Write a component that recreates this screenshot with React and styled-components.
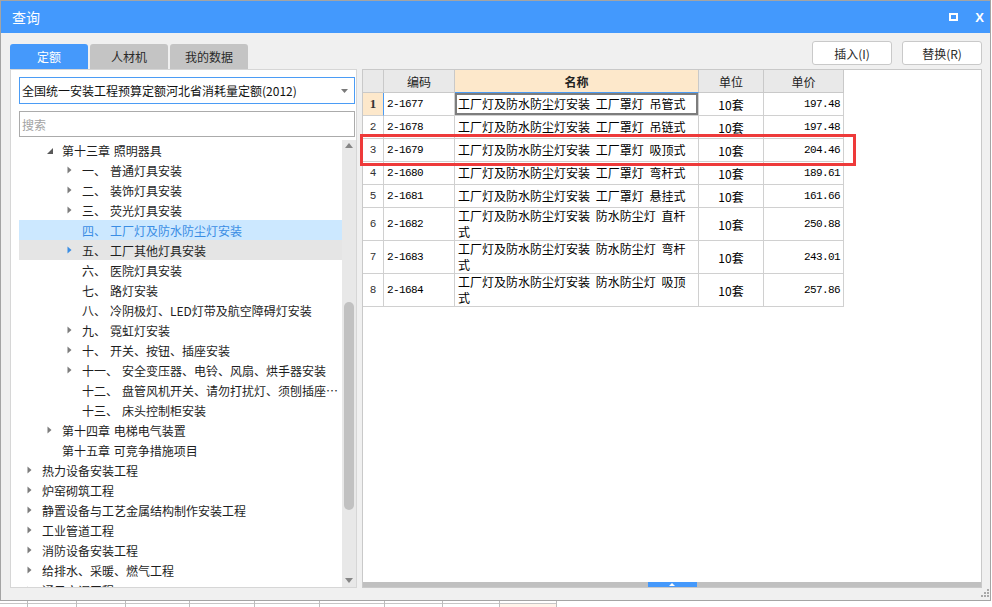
import React from 'react';
import styled, { createGlobalStyle } from 'styled-components';

const UI = '"Noto Sans CJK SC", "Noto Sans", sans-serif';
const MONO = '"Liberation Mono", "DejaVu Sans Mono", monospace';

const GlobalStyle = createGlobalStyle`
  *, *::before, *::after { box-sizing: border-box; }
  html, body { margin: 0; padding: 0; background: #ffffff; }
  body { font-family: ${UI}; font-size: 12px; color: #1e1e1e; }
`;

const Page = styled.div`
  width: 992px;
  height: 607px;
  overflow: hidden;
  display: flex;
  flex-direction: column;
`;

const Window = styled.div`
  width: 991px;
  height: 601px;
  flex: none;
  border: 1px solid #a4a4a4;
  background: #f0f0f0;
  display: flex;
  flex-direction: column;
`;

const TitleBar = styled.div`
  height: 32px;
  flex: none;
  background: #4399fd;
  color: #fff;
  display: flex;
  align-items: center;
  justify-content: space-between;
  padding: 0 6px 0 11px;
`;

const Title = styled.span`
  font-size: 14px;
  line-height: 16px;
`;

const WinControls = styled.div`
  display: flex;
  align-items: center;
  gap: 17px;
`;

const MaxIcon = styled.span`
  width: 9px;
  height: 8px;
  border: 2px solid #fff;
`;

const CloseIcon = styled.span`
  font-family: "Liberation Sans", sans-serif;
  font-weight: 700;
  font-size: 13px;
  line-height: 1;
`;

const Body = styled.div`
  flex: 1;
  position: relative;
  display: flex;
  flex-direction: column;
  padding: 8px 8px 12px 9px;
`;

const TopRow = styled.div`
  height: 28px;
  flex: none;
  display: flex;
  justify-content: space-between;
`;

const Tabs = styled.div`
  display: flex;
  align-self: flex-end;
  gap: 2px;
`;

const Tab = styled.div`
  width: 78px;
  height: 25px;
  border-radius: 3px 3px 0 0;
  display: flex;
  align-items: center;
  justify-content: center;
  font-size: 12px;
  background: ${(p) => (p.$active ? '#4599fb' : '#c4c4c4')};
  color: ${(p) => (p.$active ? '#ffffff' : '#2a2a2a')};
`;

const Actions = styled.div`
  display: flex;
  gap: 10px;
  align-self: flex-start;
`;

const Button = styled.button`
  width: 80px;
  height: 24px;
  border: 1px solid #c9c9c9;
  border-radius: 3px;
  background: #ffffff;
  font-family: ${UI};
  font-size: 12px;
  color: #2a2a2a;
  padding: 0;
`;

const Panels = styled.div`
  height: 519px;
  flex: none;
  display: flex;
  gap: 5px;
`;

const LeftPanel = styled.div`
  width: 347px;
  flex: none;
  border: 1px solid #d6d6d6;
  background: #ffffff;
  display: flex;
  flex-direction: column;
  padding: 7px 0 0 8px;
`;

const Select = styled.div`
  height: 27px;
  flex: none;
  margin-right: 1px;
  border: 1px solid #4b9cf5;
  display: flex;
  align-items: center;
  justify-content: space-between;
  padding: 0 6px 0 2px;
  font-size: 12px;
  color: #111;
`;

const Search = styled.div`
  height: 26px;
  flex: none;
  margin: 7px 1px 0 0;
  border: 1px solid #ababab;
  display: flex;
  align-items: center;
  padding-left: 2px;
  font-size: 12px;
  color: #a3a3a3;
`;

const Tree = styled.div`
  flex: 1;
  margin-top: 3px;
  display: flex;
  overflow: hidden;
  min-height: 0;
`;

const TreeList = styled.div`
  flex: 1;
  min-width: 0;
  overflow: hidden;
`;

const TreeRow = styled.div`
  height: 20px;
  display: flex;
  align-items: center;
  padding-left: ${(p) => 8 + p.$level * 20}px;
  background: ${(p) => (p.$selected ? '#cce8ff' : p.$hover ? '#e5e5e5' : 'transparent')};
  color: ${(p) => (p.$selected ? '#3a8de4' : '#1e1e1e')};
  font-size: 12px;
  white-space: nowrap;
  word-spacing: 1px;
`;

const Toggle = styled.span`
  width: 15px;
  flex: none;
  display: flex;
  align-items: center;
  height: 20px;
`;

const Num = styled.span`
  flex: none;
  margin-right: 4px;
`;

const Label = styled.span`
  overflow: hidden;
  text-overflow: ellipsis;
  min-width: 0;
`;

const VScroll = styled.div`
  width: 14px;
  flex: none;
  background: #e8e8e8;
  display: flex;
  flex-direction: column;
  align-items: center;
  padding: 3px 0 4px;
`;

const ScrollTrack = styled.div`
  flex: 1;
  width: 100%;
  display: flex;
  flex-direction: column;
  align-items: center;
  padding-top: ${(p) => p.$offset}px;
`;

const Thumb = styled.div`
  width: 10px;
  height: ${(p) => p.$size}px;
  border-radius: 5px;
  background: #c1c1c1;
`;

const RightPanel = styled.div`
  flex: 1;
  position: relative;
  border: 1px solid #c9c9c9;
  background: #ffffff;
  display: flex;
  flex-direction: column;
`;

const Table = styled.div`
  display: flex;
  flex-direction: column;
`;

const TableRow = styled.div`
  display: grid;
  grid-template-columns: 21px 71px 244px 65px 80px;
  height: ${(p) => (p.$tall ? 33 : 23)}px;
`;

const Cell = styled.div`
  border-right: 1px solid #d0d0d0;
  border-bottom: 1px solid #d0d0d0;
  display: flex;
  align-items: center;
  padding: 0 3px;
  overflow: hidden;
  min-width: 0;
  justify-content: ${(p) => (p.$align === 'center' ? 'center' : p.$align === 'right' ? 'flex-end' : 'flex-start')};
`;

const HeadCell = styled(Cell)`
  justify-content: center;
  background: ${(p) => (p.$active ? '#fde8cb' : '#e9e9e9')};
  font-weight: ${(p) => (p.$active ? 700 : 400)};
  border-bottom-color: ${(p) => (p.$active ? '#4b9cf5' : '#c9c9c9')};
  border-right-color: #c9c9c9;
  font-size: 12px;
  color: #222;
`;

const RowNum = styled(Cell)`
  justify-content: center;
  padding: 0;
  background: ${(p) => (p.$current ? '#fde8cb' : '#ffffff')};
  border-right-color: ${(p) => (p.$current ? '#4b9cf5' : '#d0d0d0')};
  font-family: ${(p) => (p.$current ? '"Liberation Serif", serif' : MONO)};
  font-weight: ${(p) => (p.$current ? 700 : 400)};
  font-size: ${(p) => (p.$current ? 13 : 11)}px;
  color: #333;
`;

const MonoCell = styled(Cell)`
  font-family: ${MONO};
  font-size: 11px;
  letter-spacing: -0.6px;
  color: #000;
`;

const NameCell = styled(Cell)`
  font-size: 12px;
  line-height: 16px;
  word-spacing: 3px;
  color: #000;
  box-shadow: ${(p) => (p.$focus ? 'inset 0 0 0 2px #7d7d7d' : 'none')};
`;

const UnitCell = styled(Cell)`
  font-size: 12px;
  color: #000;
`;

const Splitter = styled.div`
  height: 5px;
  flex: none;
  margin-top: auto;
  background: #c0c0c0;
  display: flex;
  justify-content: center;
`;

const SplitHandle = styled.div`
  width: 49px;
  background: #4599fb;
  display: flex;
  align-items: center;
  justify-content: center;
`;

const Highlight = styled.div`
  position: absolute;
  left: -3px;
  top: 64px;
  width: 496px;
  height: 32px;
  border: 3px solid #ee3a3a;
  pointer-events: none;
`;

const Grip = styled.svg`
  position: absolute;
  right: 0;
  bottom: 2px;
`;

const BackStrip = styled.div`
  height: 6px;
  flex: none;
  display: flex;
`;

const BackCell = styled.div`
  width: ${(p) => p.$w}px;
  height: 6px;
  flex: none;
  border-right: 1px solid #bdbdbd;
  background: linear-gradient(
    to bottom,
    transparent 2px,
    #c6c6c6 2px,
    #c6c6c6 3px,
    ${(p) => (p.$tint ? '#fff3ea' : 'transparent')} 3px
  );
`;

const Arrow = ({ type, color }) => {
  if (type === 'open') {
    return (
      <svg width="7" height="7" viewBox="0 0 7 7" style={{ marginTop: 3 }}>
        <polygon points="6,0 6,6 0,6" fill="#595959" />
      </svg>
    );
  }
  return (
    <svg width="5" height="8" viewBox="0 0 5 8">
      <polygon points="0.5,0.5 4.5,4 0.5,7.5" fill={color || '#7c7c7c'} />
    </svg>
  );
};

const TREE = [
  { lv: 1, tog: 'open', text: '第十三章 照明器具' },
  { lv: 2, tog: 'closed', num: '一、', text: '普通灯具安装' },
  { lv: 2, tog: 'closed', num: '二、', text: '装饰灯具安装' },
  { lv: 2, tog: 'closed', num: '三、', text: '荧光灯具安装' },
  { lv: 2, num: '四、', text: '工厂灯及防水防尘灯安装', sel: true },
  { lv: 2, tog: 'closed', num: '五、', text: '工厂其他灯具安装', hov: true },
  { lv: 2, num: '六、', text: '医院灯具安装' },
  { lv: 2, num: '七、', text: '路灯安装' },
  { lv: 2, num: '八、', text: '冷阴极灯、LED灯带及航空障碍灯安装' },
  { lv: 2, tog: 'closed', num: '九、', text: '霓虹灯安装' },
  { lv: 2, tog: 'closed', num: '十、', text: '开关、按钮、插座安装' },
  { lv: 2, tog: 'closed', num: '十一、', text: '安全变压器、电铃、风扇、烘手器安装' },
  { lv: 2, num: '十二、', text: '盘管风机开关、请勿打扰灯、须刨插座安装' },
  { lv: 2, num: '十三、', text: '床头控制柜安装' },
  { lv: 1, tog: 'closed', text: '第十四章 电梯电气装置' },
  { lv: 1, text: '第十五章 可竞争措施项目' },
  { lv: 0, tog: 'closed', text: '热力设备安装工程' },
  { lv: 0, tog: 'closed', text: '炉窑砌筑工程' },
  { lv: 0, tog: 'closed', text: '静置设备与工艺金属结构制作安装工程' },
  { lv: 0, tog: 'closed', text: '工业管道工程' },
  { lv: 0, tog: 'closed', text: '消防设备安装工程' },
  { lv: 0, tog: 'closed', text: '给排水、采暖、燃气工程' },
  { lv: 0, tog: 'closed', text: '通风空调工程' },
];

const ROWS = [
  { code: '2-1677', name: '工厂灯及防水防尘灯安装 工厂罩灯 吊管式', price: '197.48' },
  { code: '2-1678', name: '工厂灯及防水防尘灯安装 工厂罩灯 吊链式', price: '197.48' },
  { code: '2-1679', name: '工厂灯及防水防尘灯安装 工厂罩灯 吸顶式', price: '204.46' },
  { code: '2-1680', name: '工厂灯及防水防尘灯安装 工厂罩灯 弯杆式', price: '189.61' },
  { code: '2-1681', name: '工厂灯及防水防尘灯安装 工厂罩灯 悬挂式', price: '161.66' },
  { code: '2-1682', name: '工厂灯及防水防尘灯安装 防水防尘灯 直杆式', price: '250.88', tall: true },
  { code: '2-1683', name: '工厂灯及防水防尘灯安装 防水防尘灯 弯杆式', price: '243.01', tall: true },
  { code: '2-1684', name: '工厂灯及防水防尘灯安装 防水防尘灯 吸顶式', price: '257.86', tall: true },
];

const BACK_CELLS = [28, 49, 49, 64, 65, 65, 65, 58, 57, 57];

export default function App() {
  return (
    <Page>
      <GlobalStyle />
      <Window>
        <TitleBar>
          <Title>查询</Title>
          <WinControls>
            <MaxIcon />
            <CloseIcon>X</CloseIcon>
          </WinControls>
        </TitleBar>
        <Body>
          <TopRow>
            <Tabs>
              <Tab $active>定额</Tab>
              <Tab>人材机</Tab>
              <Tab>我的数据</Tab>
            </Tabs>
            <Actions>
              <Button>插入(I)</Button>
              <Button>替换(R)</Button>
            </Actions>
          </TopRow>
          <Panels>
            <LeftPanel>
              <Select>
                <span>全国统一安装工程预算定额河北省消耗量定额(2012)</span>
                <svg width="7" height="4" viewBox="0 0 7 4">
                  <polygon points="0,0 7,0 3.5,4" fill="#7a7a7a" />
                </svg>
              </Select>
              <Search>搜索</Search>
              <Tree>
                <TreeList>
                  {TREE.map((it, i) => (
                    <TreeRow key={i} $level={it.lv} $selected={it.sel} $hover={it.hov}>
                      <Toggle>
                        {it.tog && <Arrow type={it.tog} color={it.hov ? '#3a8de4' : undefined} />}
                      </Toggle>
                      {it.num && <Num>{it.num}</Num>}
                      <Label>{it.text}</Label>
                    </TreeRow>
                  ))}
                </TreeList>
                <VScroll>
                  <svg width="8" height="5" viewBox="0 0 8 5">
                    <polygon points="4,0 8,5 0,5" fill="#868686" />
                  </svg>
                  <ScrollTrack $offset={154}>
                    <Thumb $size={208} />
                  </ScrollTrack>
                  <svg width="8" height="5" viewBox="0 0 8 5">
                    <polygon points="0,0 8,0 4,5" fill="#868686" />
                  </svg>
                </VScroll>
              </Tree>
            </LeftPanel>
            <RightPanel>
              <Table>
                <TableRow>
                  <HeadCell />
                  <HeadCell>编码</HeadCell>
                  <HeadCell $active>名称</HeadCell>
                  <HeadCell>单位</HeadCell>
                  <HeadCell>单价</HeadCell>
                </TableRow>
                {ROWS.map((r, i) => (
                  <TableRow key={r.code} $tall={r.tall}>
                    <RowNum $current={i === 0}>{i + 1}</RowNum>
                    <MonoCell>{r.code}</MonoCell>
                    <NameCell $focus={i === 0}>{r.name}</NameCell>
                    <UnitCell $align="center">10套</UnitCell>
                    <MonoCell $align="right">{r.price}</MonoCell>
                  </TableRow>
                ))}
              </Table>
              <Splitter>
                <SplitHandle>
                  <svg width="6" height="3" viewBox="0 0 6 3">
                    <polygon points="3,0 6,3 0,3" fill="#ffffff" />
                  </svg>
                </SplitHandle>
              </Splitter>
              <Highlight />
            </RightPanel>
          </Panels>
          <Grip width="9" height="9" viewBox="0 0 9 9">
            <rect x="6" y="0" width="2" height="2" fill="#a9a9a9" />
            <rect x="3" y="3" width="2" height="2" fill="#a9a9a9" />
            <rect x="6" y="3" width="2" height="2" fill="#a9a9a9" />
            <rect x="0" y="6" width="2" height="2" fill="#a9a9a9" />
            <rect x="3" y="6" width="2" height="2" fill="#a9a9a9" />
            <rect x="6" y="6" width="2" height="2" fill="#a9a9a9" />
          </Grip>
        </Body>
      </Window>
      <BackStrip>
        {BACK_CELLS.map((w, i) => (
          <BackCell key={i} $w={w} $tint={i === BACK_CELLS.length - 1} />
        ))}
      </BackStrip>
    </Page>
  );
}
